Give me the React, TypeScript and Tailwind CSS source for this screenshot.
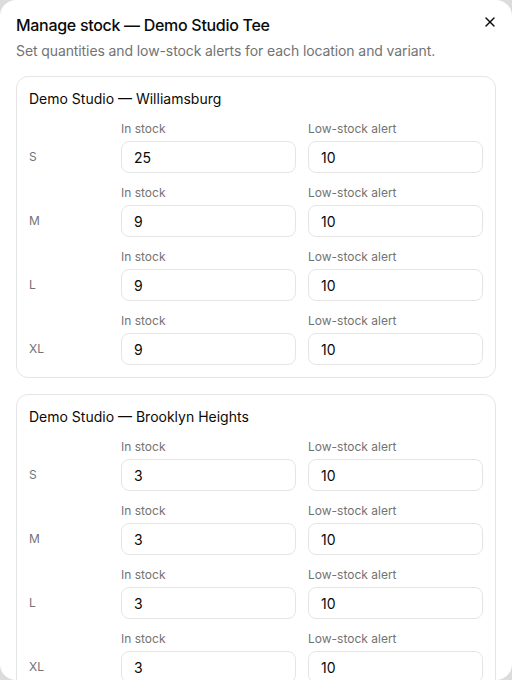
import { X } from 'lucide-react';

interface VariantStock {
  size: string;
  inStock: number;
  alert: number;
}

interface Location {
  name: string;
  variants: VariantStock[];
}

const LOCATIONS: Location[] = [
  {
    name: 'Demo Studio — Williamsburg',
    variants: [
      { size: 'S', inStock: 25, alert: 10 },
      { size: 'M', inStock: 9, alert: 10 },
      { size: 'L', inStock: 9, alert: 10 },
      { size: 'XL', inStock: 9, alert: 10 },
    ],
  },
  {
    name: 'Demo Studio — Brooklyn Heights',
    variants: [
      { size: 'S', inStock: 3, alert: 10 },
      { size: 'M', inStock: 3, alert: 10 },
      { size: 'L', inStock: 3, alert: 10 },
      { size: 'XL', inStock: 3, alert: 10 },
    ],
  },
];

function NumberField({ label, value }: { label: string; value: number }) {
  return (
    <label className="flex flex-col gap-1">
      <span className="text-xs leading-4 text-[#737373]">{label}</span>
      <input
        type="text"
        defaultValue={value}
        className="h-8 w-full rounded-lg border border-[#e5e5e5] bg-white px-3 text-sm text-[#0a0a0a] outline-none"
      />
    </label>
  );
}

function LocationCard({ location }: { location: Location }) {
  return (
    <div className="rounded-xl border border-[#e5e5e5] p-3">
      <h3 className="text-sm leading-5 font-normal text-[#0a0a0a]">{location.name}</h3>
      <div className="mt-3 flex flex-col gap-3">
        {location.variants.map((v) => (
          <div key={v.size} className="grid grid-cols-[80px_1fr_1fr] items-end gap-3">
            <span className="flex h-8 items-center text-xs text-[#737373]">{v.size}</span>
            <NumberField label="In stock" value={v.inStock} />
            <NumberField label="Low-stock alert" value={v.alert} />
          </div>
        ))}
      </div>
    </div>
  );
}

export default function App() {
  return (
    <div
      className="h-[680px] w-[512px] bg-[#dcdcdc]"
      style={{ fontFamily: 'Inter, "Noto Sans", sans-serif' }}
    >
      <div className="relative h-full overflow-hidden rounded-2xl bg-white px-4 pt-[13px]">
        <button className="absolute right-[14px] top-[14px] text-[#0a0a0a]">
          <X size={16} strokeWidth={2} />
        </button>
        <h2 className="text-base leading-6 font-medium tracking-[-0.3px] text-[#0a0a0a]">
          Manage stock — Demo Studio Tee
        </h2>
        <p className="mt-1 text-sm leading-5 tracking-[-0.1px] text-[#737373]">
          Set quantities and low-stock alerts for each location and variant.
        </p>
        <div className="mt-[15px] flex flex-col gap-4">
          {LOCATIONS.map((loc) => (
            <LocationCard key={loc.name} location={loc} />
          ))}
        </div>
      </div>
    </div>
  );
}
